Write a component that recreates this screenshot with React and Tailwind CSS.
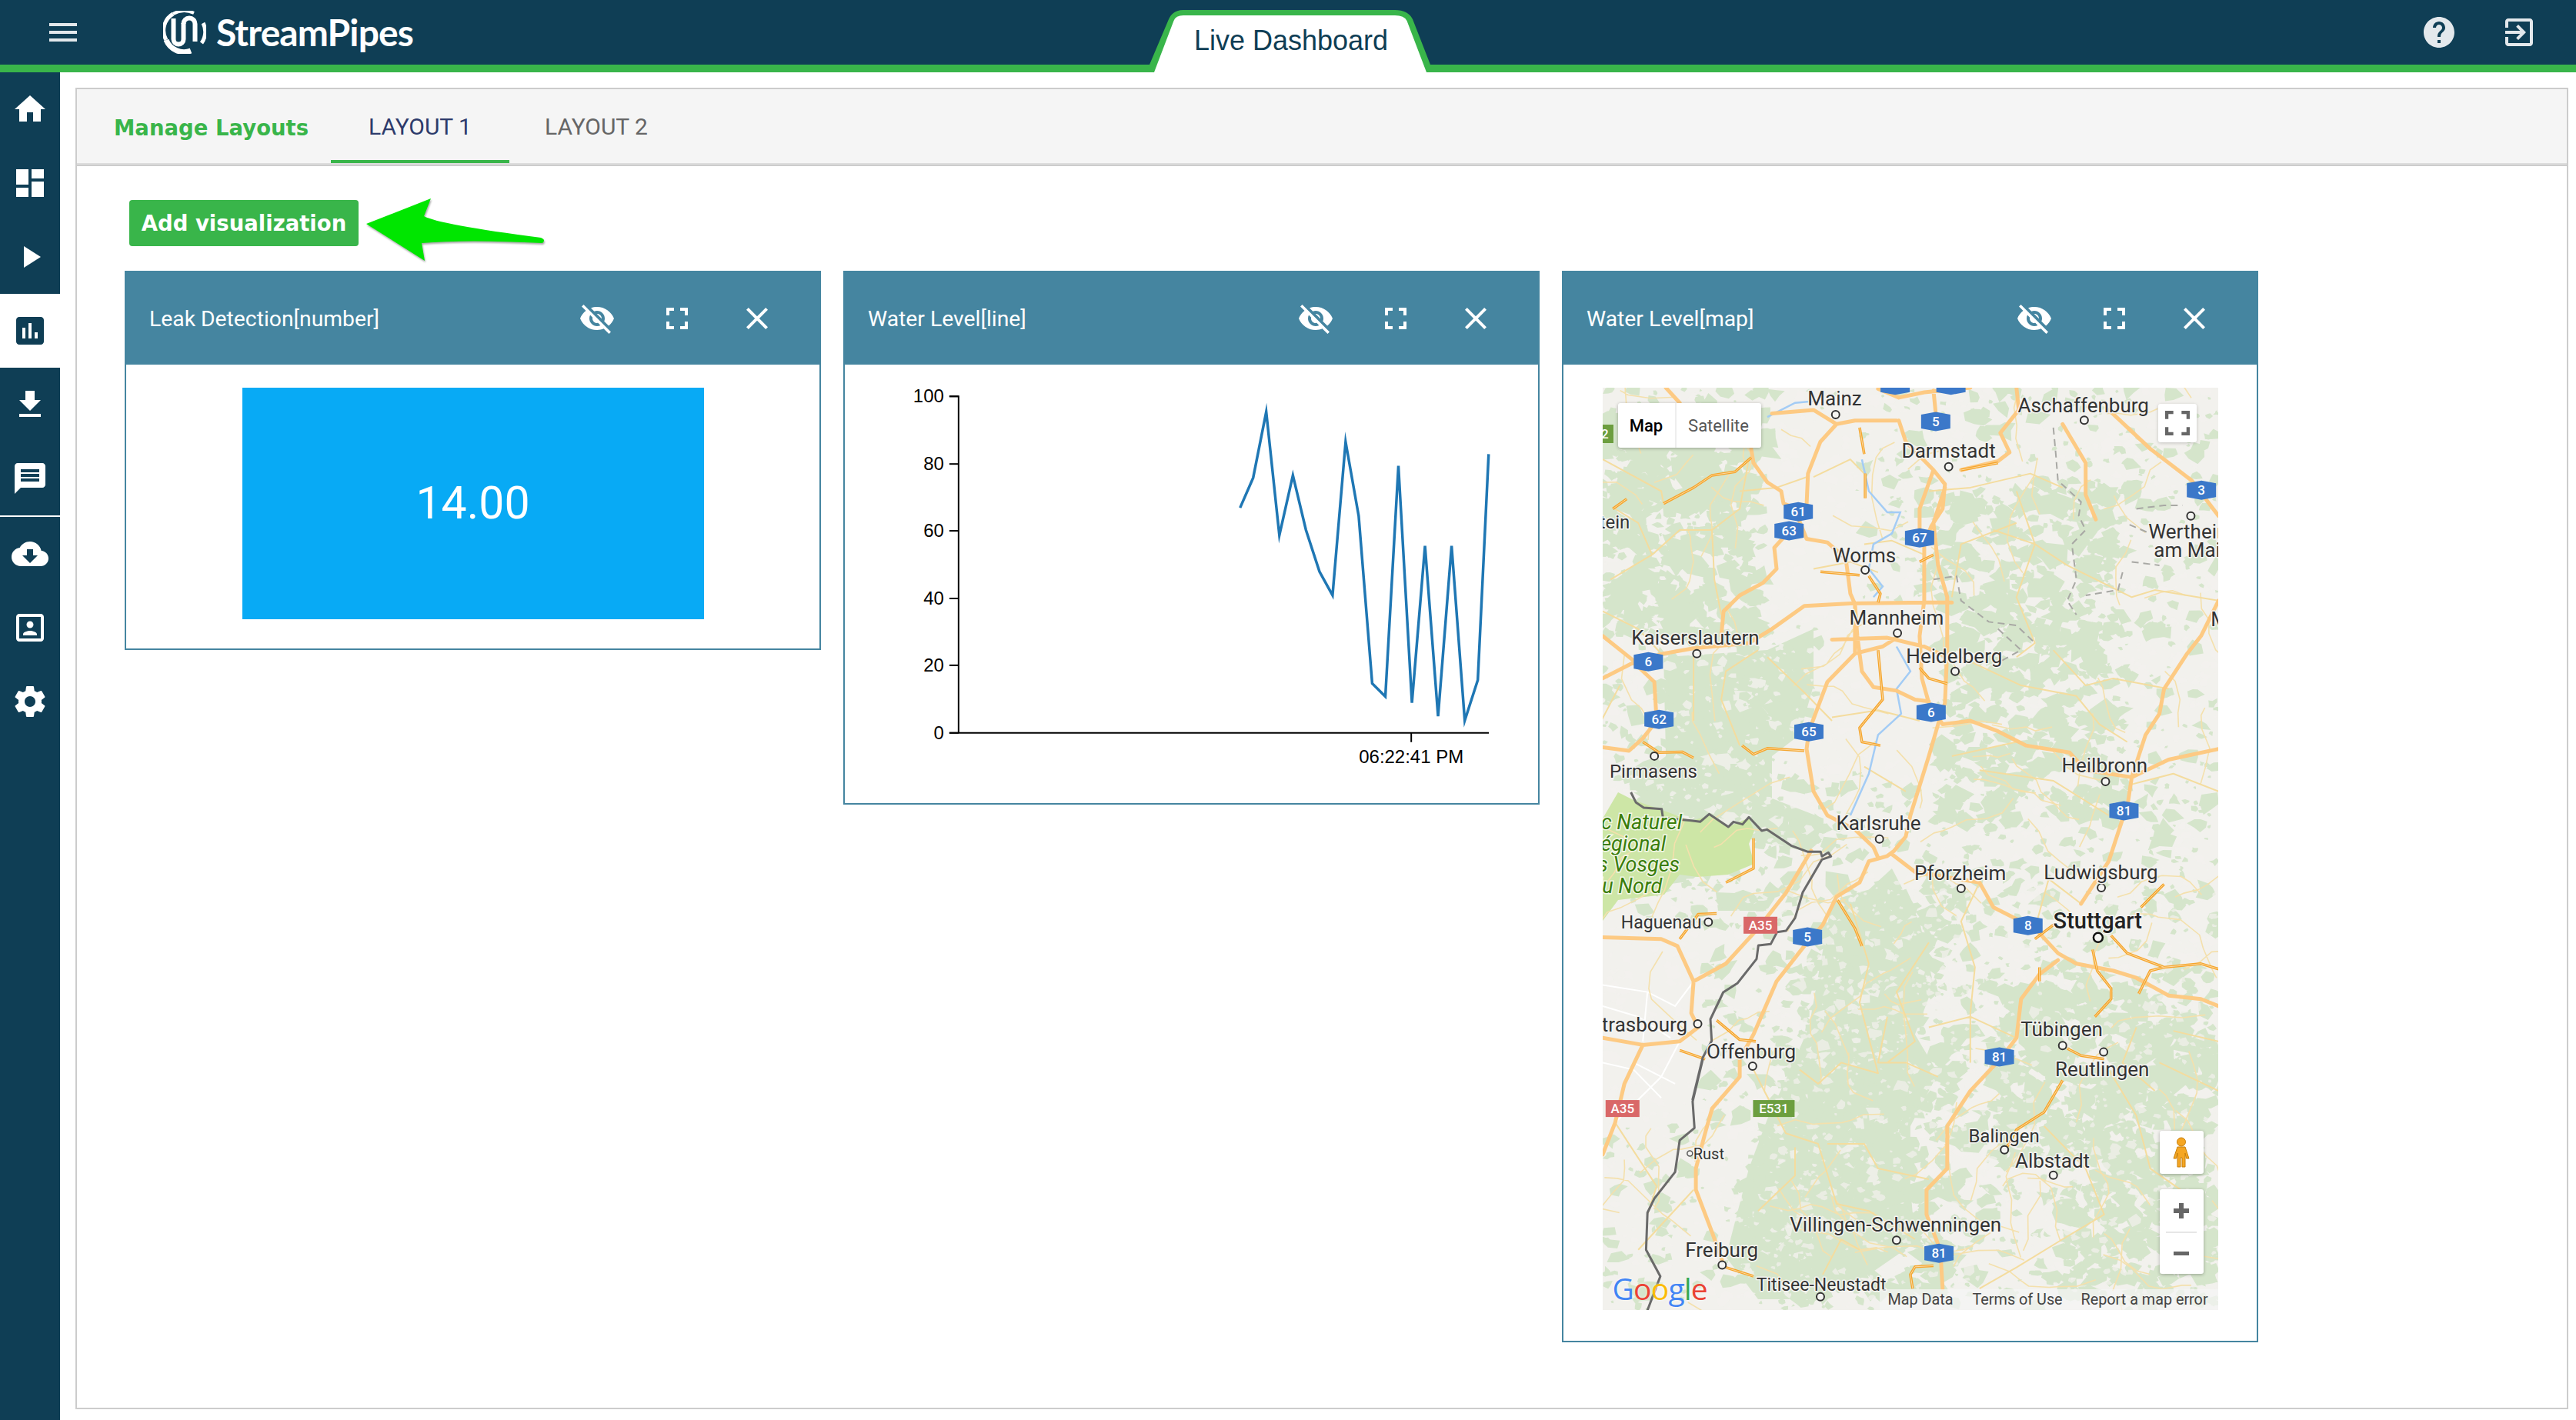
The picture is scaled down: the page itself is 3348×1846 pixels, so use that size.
const ICONS = {
  menu: "M3 18h18v-2H3v2zm0-5h18v-2H3v2zm0-7v2h18V6H3z",
  home: "M10 20v-6h4v6h5v-8h3L12 3 2 12h3v8z",
  dashboard: "M3 13h8V3H3v10zm0 8h8v-6H3v6zm10 0h8V11h-8v10zm0-18v6h8V3h-8z",
  play: "M8 5v14l11-7z",
  assessment: "M19 3H5c-1.1 0-2 .9-2 2v14c0 1.1.9 2 2 2h14c1.1 0 2-.9 2-2V5c0-1.1-.9-2-2-2zM9 17H7v-7h2v7zm4 0h-2V7h2v10zm4 0h-2v-4h2v4z",
  download: "M19 9h-4V3H9v6H5l7 7 7-7zM5 18v2h14v-2H5z",
  message: "M20 2H4c-1.1 0-1.99.9-1.99 2L2 22l4-4h14c1.1 0 2-.9 2-2V4c0-1.1-.9-2-2-2zm-2 12H6v-2h12v2zm0-3H6V9h12v2zm0-3H6V6h12v2z",
  cloud: "M19.35 10.04C18.67 6.59 15.64 4 12 4 9.11 4 6.6 5.64 5.35 8.04 2.34 8.36 0 10.91 0 14c0 3.31 2.69 6 6 6h13c2.76 0 5-2.24 5-5 0-2.64-2.05-4.78-4.65-4.96zM17 13l-5 5-5-5h3V9h4v4h3z",
  portrait: "M12 12.25c1.24 0 2.25-1.01 2.25-2.25S13.24 7.75 12 7.75 9.75 8.76 9.75 10s1.01 2.25 2.25 2.25zm4.5 4c0-1.5-3-2.25-4.5-2.25s-4.5.75-4.5 2.25V17h9v-.75zM19 3H5c-1.1 0-2 .9-2 2v14c0 1.1.9 2 2 2h14c1.1 0 2-.9 2-2V5c0-1.1-.9-2-2-2zm0 16H5V5h14v14z",
  settings: "M19.43 12.98c.04-.32.07-.64.07-.98s-.03-.66-.07-.98l2.11-1.65c.19-.15.24-.42.12-.64l-2-3.46c-.12-.22-.39-.3-.61-.22l-2.49 1c-.52-.4-1.08-.73-1.69-.98l-.38-2.65C14.46 2.18 14.25 2 14 2h-4c-.25 0-.46.18-.49.42l-.38 2.65c-.61.25-1.17.59-1.69.98l-2.49-1c-.23-.09-.49 0-.61.22l-2 3.46c-.13.22-.07.49.12.64l2.11 1.65c-.04.32-.07.65-.07.98s.03.66.07.98l-2.11 1.65c-.19.15-.24.42-.12.64l2 3.46c.12.22.39.3.61.22l2.49-1c.52.4 1.08.73 1.69.98l.38 2.65c.03.24.24.42.49.42h4c.25 0 .46-.18.49-.42l.38-2.65c.61-.25 1.17-.59 1.69-.98l2.49 1c.23.09.49 0 .61-.22l2-3.46c.12-.22.07-.49-.12-.64l-2.11-1.65zM12 15.5c-1.93 0-3.5-1.57-3.5-3.5s1.57-3.5 3.5-3.5 3.5 1.57 3.5 3.5-1.57 3.5-3.5 3.5z",
  help: "M12 2C6.48 2 2 6.48 2 12s4.48 10 10 10 10-4.48 10-10S17.52 2 12 2zm1 17h-2v-2h2v2zm2.07-7.75l-.9.92C13.45 12.9 13 13.5 13 15h-2v-.5c0-1.1.45-2.1 1.17-2.83l1.24-1.26c.37-.36.59-.86.59-1.41 0-1.1-.9-2-2-2s-2 .9-2 2H8c0-2.21 1.79-4 4-4s4 1.79 4 4c0 .88-.36 1.68-.93 2.25z",
  exit: "M10.09 15.59L11.5 17l5-5-5-5-1.41 1.41L12.67 11H3v2h9.67l-2.58 2.59zM19 3H5c-1.11 0-2 .9-2 2v4h2V5h14v14H5v-4H3v4c0 1.1.89 2 2 2h14c1.1 0 2-.9 2-2V5c0-1.1-.9-2-2-2z",
  fullscreen: "M7 14H5v5h5v-2H7v-3zm-2-4h2V7h3V5H5v5zm12 7h-3v2h5v-5h-2v3zM14 5v2h3v3h2V5h-5z",
  close: "M19 6.41L17.59 5 12 10.59 6.41 5 5 6.41 10.59 12 5 17.59 6.41 19 12 13.41 17.59 19 19 17.59 13.41 12z",
  eyeOff: "M12 7c2.76 0 5 2.24 5 5 0 .65-.13 1.26-.36 1.83l2.92 2.92c1.51-1.26 2.7-2.89 3.43-4.75-1.73-4.39-6-7.5-11-7.5-1.4 0-2.74.25-3.98.7l2.16 2.16C10.74 7.13 11.35 7 12 7zM2 4.27l2.28 2.28.46.46C3.08 8.3 1.78 10.02 1 12c1.73 4.39 6 7.5 11 7.5 1.55 0 3.03-.3 4.38-.84l.42.42L19.73 22 21 20.73 3.27 3 2 4.27zM7.53 9.8l1.55 1.55c-.05.21-.08.43-.08.65 0 1.66 1.34 3 3 3 .22 0 .44-.03.65-.08l1.55 1.55c-.67.33-1.41.53-2.2.53-2.76 0-5-2.24-5-5 0-.79.2-1.53.53-2.2zm4.31-.78l3.15 3.15.02-.16c0-1.66-1.34-3-3-3l-.17.01z",
};

function Icon({ name, className = "w-12 h-12" }) {
  return (
    <svg viewBox="0 0 24 24" className={`fill-current shrink-0 ${className}`}>
      <path d={ICONS[name]} />
    </svg>
  );
}

// Map geometry is read off two zoomed crops, so points stay in crop coordinates
const ROAD_SCALE = 1.668;
const mapY = (y, lower) => (lower ? 556 + y / 2.178 : (y - 357) / 2.178);
const toPath = (pts, lower) => {
  let d = "";
  for (let i = 0; i < pts.length; i += 2) {
    d += `${i ? "L" : "M"}${((pts[i] - 103) / ROAD_SCALE).toFixed(1)} ${mapY(pts[i + 1], lower).toFixed(1)}`;
  }
  return d;
};
const px = (x) => (x - 103) / ROAD_SCALE;

const MAJOR_TOP = [
  [103,1180,170,1135,235,1110,300,1095,420,1080,470,1040,540,975,640,968,800,965,860,965],
  [103,1060,170,1130],
  [425,530,430,570,460,625,490,650,495,685,525,700,545,690,548,600,575,510,610,460,650,450,740,450],
  [510,760,475,810,480,870,450,910,400,945,365,990,360,1060],
  [525,720,545,785,590,795,630,840,640,940,650,970,655,1060,665,1160,690,1205,740,1215,780,1240,810,1245],
  [820,365,825,430,825,460],
  [745,450,760,510,820,590,845,630,840,700,815,750,800,800,800,960,790,1060,795,1180,810,1250],
  [820,590,790,700,790,800],
  [845,640,820,740,830,860,850,950,850,1100,845,1250,830,1310,810,1400,770,1568],
  [810,1250,840,1310,900,1300,960,1330,1020,1370,1115,1390,1150,1440,1250,1460,1330,1410,1438,1380],
  [1240,1545,1250,1460],
  [600,1070,720,1065,800,1090,850,1120],
  [545,1380,550,1330,590,1190,650,1110,650,970],
  [545,1380,560,1500,590,1568],
  [1000,357,1005,420,965,485,985,540,960,565,880,590],
  [1200,420,1290,530,1380,620,1438,720],
  [1100,460,1150,570,1150,660,1172,730],
  [470,430,560,420,610,460],
  [700,360,745,385,800,370,900,357],
  [240,357,270,400],
  [1438,960,1400,1060,1370,1110,1320,1210,1310,1280,1280,1340,1250,1460],
  [103,1375,160,1385,190,1350,220,1300,215,1190,170,1135],
  [650,1110,710,1090,740,1065],
];
const MAJOR_BOTTOM = [
  [590,0,650,40,690,90,700,120],
  [720,115,680,130,660,190,610,230,580,310,540,370,480,470,430,620,400,690,400,740,340,830,325,900,305,1000,305,1060,340,1180,362,1260],
  [555,100,500,220,440,320,370,420,300,470,265,370,230,350,103,345],
  [300,470,295,560,310,600,270,640,190,650,103,630],
  [190,650,150,760,130,870,103,960],
  [730,110,780,160,920,190,950,260,1040,320,1090,390,1130,420,1210,440,1260,460,1330,510,1400,520,1438,540],
  [1230,10,1200,130,1140,250],
  [1090,410,1050,450,1010,520,1000,630,965,690,900,780,850,880,850,1000,805,1060,805,1130,835,1230,840,1340],
  [770,0,760,60,735,100,720,115],
];
const THIN_TOP = [
  [235,685,300,640,340,605,390,595,425,555],
  [125,700,155,672],
  [575,878,660,888],
  [672,600,672,670],
  [660,470,670,545],
  [405,1370,430,1395,460,1378,540,1385],
  [190,1360,225,1390,275,1388,300,1405],
  [790,850,820,830],
  [880,590,960,570],
  [680,890,705,940,700,965],
  [790,1150,810,1180,850,1195],
  [700,1100,710,1240,660,1320,665,1360,705,1370],
];
const THIN_BOTTOM = [
  [1205,340,1240,390,1320,430,1400,420,1438,435],
  [1040,350,1080,310],
  [1165,380,1175,440,1205,490,1205,520,1170,570],
  [1050,430,1050,470],
  [1110,660,1140,680,1190,690],
  [1100,750,1060,840,1000,890,975,950],
  [612,240,650,320,665,370],
  [430,65,430,150,370,190],
  [1320,195,1270,260],
  [350,580,400,635,435,640],
  [270,665,325,690],
  [370,1280,430,1305],
  [270,350,310,280,350,278],
  [1265,505,1290,440,1320,430],
  [775,1340,770,1300,780,1278,820,1275],
];
const MINOR_TOP = [
  [103,560,230,650,235,685],[420,560,400,700,340,760,345,900,360,1000],
  [545,610,480,640,400,650],[670,600,640,560,560,610],[810,650,900,640,1030,600,1100,640],
  [670,800,730,790,800,830],[560,870,640,850,700,880],[1000,650,1040,800,1110,860,1250,950,1300,930,1438,960],
  [1080,1100,1150,1200,1210,1180,1330,1210],[950,760,1040,800,1000,950,1040,1080,1000,1120],
  [440,1100,370,1160,360,1240,400,1370],[460,1120,540,1220,600,1300],[600,1290,700,1270,790,1300],
  [880,1120,1010,1200,1130,1230,1180,1310,1240,1360],[860,1400,1000,1360],[120,900,210,830,180,740,130,700],
  [210,830,270,760,340,760],[103,990,180,1040,230,1110],[860,950,880,800,1000,740],[1250,1480,1340,1450,1438,1500],
  [920,1440,1080,1470,1200,1568],[670,1430,760,1500],[140,1200,100,1300],[300,1120,300,1300],
];
const MINOR_BOTTOM = [
  [640,250,680,420,660,530,700,730,620,700,570,760,530,720],
  [720,570,700,700,760,700,830,740],[810,360,740,500,780,640,720,700],[920,190,880,300,910,430,900,560,900,700],
  [1000,630,900,570,810,600],[430,720,500,900,570,930,610,1100,680,1120,780,1200],
  [590,930,670,930,700,1000,810,1030],[1060,880,1150,1000,1190,1130,1100,1200,1000,1280],[1200,720,1260,850,1290,1000,1400,1100],
  [1310,700,1438,780],[1140,250,1070,180,1040,320],[1000,1280,920,1340],[520,940,520,1020,440,1120],[580,1300,620,1200,660,1230],
  [130,870,220,1050,200,1130],[300,1060,180,1230],[1260,600,1230,700,1300,780],[1438,640,1340,610],
];
const WHITE_BOTTOM = [
  [103,480,200,500,260,540,300,470],[200,500,190,640],[103,540,180,570,250,630],
  [270,640,230,740,130,870],[170,700,260,760],[103,700,170,720,230,800],
];
const BORDER = (() => {
  const a = [110,0,130,40,160,60,230,65,235,100,345,110,380,115,415,85,490,135,510,115,545,125,570,97,620,150,640,145,735,208,800,232,850,232,855,250,880,235,890,250,855,262,780,390,750,490,715,540,680,545,655,592,607,597,600,650,525,745,470,780,420,885,425,970,390,1035,350,1200];
  let d = "";
  for (let i = 0; i < a.length; i += 2) d += `${i ? "L" : "M"}${a[i] / 3} ${526 + a[i + 1] / 3}`;
  return d;
})();
const BORDER_SOUTH = [320,690,298,810,302,885,270,920,260,1010,215,1085,200,1125,197,1230,228,1305,200,1401];
const RIVER_TOP = [
  [460,440,520,400,560,395],[665,560,680,650,720,710,748,710,730,770,690,800,680,870,710,920,690,950],
  [740,1090,770,1160,740,1210,750,1280,700,1340,680,1450,640,1568],
];
const DASHED_TOP = [
  [1080,470,1085,540,1090,620,1140,680,1135,720,1150,760,1120,800,1130,900,1110,960,1130,1000],
  [1260,700,1320,690,1360,690],[1245,745,1290,770],[1250,850,1310,860],[1230,880,1220,930,1150,945],
  [820,900,870,890,880,960,940,1020,1000,1030,1040,1080],[960,1040,1010,1100,940,1150],
];
// only the two dense forests get a solid base, the rest of the green is speckle
const FORESTS = [
  toPath([235,1120,460,1100,560,1040,560,1200,530,1340,470,1400,470,1568,235,1568,160,1480,240,1400]) + "Z",
  toPath([600,240,680,210,730,150,790,300,820,480,780,620,830,730,770,880,770,1050,780,1210,680,1300,560,1370,440,1370,370,1250,420,1000,460,860,510,720,550,600], true) + "Z",
  `M40 526L200 526L287 560L287 586L267 603L200 590L130 560L80 552Z`,
  `M147 656L227 659L213 680L150 680Z`,
];
const PARC = `M0 560L20 526L40 536L77 549L115 563L140 556L163 571L190 559L197 576L190 593L197 619L163 633L123 636L100 633L80 659L20 666L0 693Z`;

function mulberry(seed) {
  return () => {
    seed |= 0; seed = (seed + 0x6d2b79f5) | 0;
    let t = Math.imul(seed ^ (seed >>> 15), 1 | seed);
    t = (t + Math.imul(t ^ (t >>> 7), 61 | t)) ^ t;
    return ((t ^ (t >>> 14)) >>> 0) / 4294967296;
  };
}
function blobs(seed, count, rMin, rMax, skip, box = [0, 0, 800, 1199]) {
  const rnd = mulberry(seed);
  let d = "";
  for (let i = 0; i < count; i++) {
    const cx = box[0] + rnd() * (box[2] - box[0]), cy = box[1] + rnd() * (box[3] - box[1]), r = rMin + rnd() * rnd() * (rMax - rMin);
    if (skip && skip(cx, cy)) continue;
    const sides = 5 + Math.floor(rnd() * 4);
    const st = rnd() * 6.28;
    for (let s = 0; s < sides; s++) {
      const ang = st + (s / sides) * 6.28, rr = r * (0.35 + rnd() * 0.9);
      d += `${s ? "L" : "M"}${(cx + Math.cos(ang) * rr * 1.3).toFixed(1)} ${(cy + Math.sin(ang) * rr).toFixed(1)}`;
    }
    d += "Z";
  }
  return d;
}
// short wandering side roads between the traced ones
function sideRoads(seed, count) {
  const rnd = mulberry(seed);
  let d = "";
  for (let i = 0; i < count; i++) {
    let x = rnd() * 800, y = rnd() * 1199, a = rnd() * 6.28;
    d += `M${x.toFixed(1)} ${y.toFixed(1)}`;
    const n = 3 + Math.floor(rnd() * 5);
    for (let s = 0; s < n; s++) {
      a += (rnd() - 0.5) * 1.3;
      const l = 10 + rnd() * 22;
      x += Math.cos(a) * l; y += Math.sin(a) * l;
      d += `L${x.toFixed(1)} ${y.toFixed(1)}`;
    }
  }
  return d;
}
const isPlain = (x, y) =>
  (x > 215 && x < 330 && y > 30 && y < 300) ||
  (x > 0 && x < 130 && y > 700 && y < 960) ||
  (x > 230 && x < 420 && y > 620 && y < 800) ||
  (x > 280 && x < 430 && y > 280 && y < 500);
const GREEN_SPECKS = blobs(7, 2400, 2, 17, isPlain);
const LIGHT_FLECKS = blobs(21, 3800, 1.5, 11);
const DENSE_GREEN = [
  blobs(61, 420, 5, 22, null, [440, 130, 680, 560]), // odenwald
  blobs(62, 420, 5, 24, null, [0, 30, 210, 330]), // pfalz north
  blobs(63, 420, 5, 24, null, [510, 780, 800, 1010]), // swabian edge
  blobs(64, 380, 5, 24, null, [220, 640, 480, 1190]), // black forest fringe
  blobs(65, 220, 5, 20, null, [600, 1010, 800, 1190]),
].join("");
const EXTRA_FLECKS = blobs(71, 800, 2, 9, null, [220, 640, 800, 1190]);
const YELLOW_ROADS = sideRoads(51, 130);

const SHIELDS_TOP = [["61",527,708],["63",507,762],["67",790,782],["5",825,453],["6",202,1133],["62",225,1296],["65",550,1331],["6",815,1276],["3",1401,647],["",737,350],["",858,350],["81",1233,1555]];
const SHIELDS_BOTTOM = [["8",1025,312],["5",547,344],["81",963,684],["81",832,1240]];
const PLATES = [["A35",445,311,"#d96868",44],["A35",146,830,"#d96868",44],["E531",474,830,"#6c9e3f",54]];

const LABELS_TOP = [
  ["Mainz",606,387],["Aschaffenburg",1145,407],["Darmstadt",853,535],["Wertheim",1379,763],["am Main",1382,816],["Worms",670,830],
  ["Mannheim",740,1007],["Kaiserslautern",304,1065],["Heidelberg",865,1117],["Heilbronn",1191,1425],["Pirmasens",213,1443,24],["Stein",117,736,24],["M",1440,1012],
];
const LABELS_BOTTOM = [
  ["Karlsruhe",701,22],["Pforzheim",878,163],["Ludwigsburg",1183,160],["Haguenau",230,303,23],["Strasbourg",181,592],["Offenburg",425,667],
  ["Tübingen",1098,605],["Reutlingen",1186,718],["Balingen",973,907,24],["Albstadt",1078,977],["Rust",333,957,20],
  ["Villingen-Schwenningen",738,1158],["Freiburg",361,1230],["Titisee-Neustadt",577,1328,23],
];
const PARC_LABELS = [["Parc Naturel",275,20],["Régional",240,80],["des Vosges",270,140],["du Nord",232,200]];
const DOTS_TOP = [[608,433],[1147,449],[853,581],[1378,720],[672,873],[742,1052],[307,1110],[867,1160],[1193,1472],[215,1400]];
const DOTS_BOTTOM = [[703,67],[880,207],[1184,205],[332,302],[309,590],[428,710],[1100,652],[1189,670],[974,947],[1080,1019],[740,1203],[362,1273],[575,1363]];

function Shield({ label, x, y }) {
  return (
    <g transform={`translate(${x} ${y})`}>
      <path d="M-19 -9L0 -12.5L19 -9V9L0 12.5L-19 9Z" fill="#3b78c9" />
      <text y="6" textAnchor="middle" fontFamily="Roboto" fontWeight="500" fontSize="17" fill="#fff">{label}</text>
    </g>
  );
}

function MapLabel({ text, x, y, size = 26 }) {
  return (
    <text x={x} y={y + size * 0.36} textAnchor="middle" fontFamily="Roboto" fontSize={size} fill="#333" stroke="#f5f5f2" strokeWidth="3" paintOrder="stroke" strokeLinejoin="round">
      {text}
    </text>
  );
}

function MapDrawing() {
  const lines = (list, lower) => list.map((p) => toPath(p, lower)).join("");
  return (
    <svg viewBox="0 0 800 1199" className="w-[800px] h-[1199px] block">
      <rect width="800" height="1199" fill="#f2f1ed" />
      {FORESTS.map((d, i) => <path key={i} d={d} fill="#d5e5cb" />)}
      <path d={LIGHT_FLECKS} fill="#f2f1ed" opacity="0.8" />
      <path d={GREEN_SPECKS} fill="#d5e5cb" />
      <path d={DENSE_GREEN} fill="#d5e5cb" />
      <path d={EXTRA_FLECKS} fill="#f2f1ed" opacity="0.7" />
      <path d={PARC} fill="#cde6a6" />
      <path d={lines(WHITE_BOTTOM, true)} fill="none" stroke="#ffffff" strokeWidth="2" />
      <path d={YELLOW_ROADS} fill="none" stroke="#f4e0ac" strokeWidth="1.6" strokeLinejoin="round" />
      <path d={lines(MINOR_TOP) + lines(MINOR_BOTTOM, true)} fill="none" stroke="#f4dc9e" strokeWidth="2" strokeLinejoin="round" />
      <path d={lines(RIVER_TOP)} fill="none" stroke="#a3ccf5" strokeWidth="2.5" />
      <path d={lines(DASHED_TOP)} fill="none" stroke="#a8a8a4" strokeWidth="2" strokeDasharray="9 6" />
      <path d={lines(MAJOR_TOP) + lines(MAJOR_BOTTOM, true)} fill="none" stroke="#fdca83" strokeWidth="5" strokeLinejoin="round" strokeLinecap="round" />
      <path d={lines(THIN_TOP) + lines(THIN_BOTTOM, true)} fill="none" stroke="#f5a52c" strokeWidth="3.5" strokeLinejoin="round" />
      <path d={lines(THIN_TOP) + lines(THIN_BOTTOM, true)} fill="none" stroke="#fdd9a0" strokeWidth="1" strokeLinejoin="round" />
      <path d={BORDER + toPath(BORDER_SOUTH, true)} fill="none" stroke="#6a6a6a" strokeWidth="3" strokeLinejoin="round" />
      {DOTS_TOP.map(([x, y]) => <circle key={`${x}-${y}`} cx={px(x)} cy={mapY(y)} r="5" fill="#f5f5f2" stroke="#333" strokeWidth="2" />)}
      {DOTS_BOTTOM.map(([x, y]) => <circle key={`${x}-${y}`} cx={px(x)} cy={mapY(y, true)} r="5" fill="#f5f5f2" stroke="#333" strokeWidth="2" />)}
      <circle cx={px(292)} cy={mapY(957, true)} r="3.5" fill="#f5f5f2" stroke="#555" strokeWidth="1.5" />
      <circle cx={px(1177)} cy={mapY(346, true)} r="6" fill="#f5f5f2" stroke="#111" strokeWidth="2.5" />
      {SHIELDS_TOP.map(([t, x, y]) => <Shield key={`${x}-${y}`} label={t} x={px(x)} y={mapY(y)} />)}
      {SHIELDS_BOTTOM.map(([t, x, y]) => <Shield key={`${x}-${y}`} label={t} x={px(x)} y={mapY(y, true)} />)}
      <rect x="0" y="48" width="14" height="24" fill="#6c9e3f" />
      <text x="-2" y="66" fontFamily="Roboto" fontWeight="500" fontSize="17" fill="#fff">2</text>
      {PLATES.map(([t, x, y, c, w]) => (
        <g key={`${x}-${y}`} transform={`translate(${px(x)} ${mapY(y, true)})`}>
          <rect x={-w / 2} y="-11" width={w} height="22" fill={c} />
          <text y="6" textAnchor="middle" fontFamily="Roboto" fontWeight="500" fontSize="17" fill="#fff">{t}</text>
        </g>
      ))}
      {LABELS_TOP.map(([t, x, y, s]) => <MapLabel key={t} text={t} x={px(x)} y={mapY(y)} size={s} />)}
      {LABELS_BOTTOM.map(([t, x, y, s]) => <MapLabel key={t} text={t} x={px(x)} y={mapY(y, true)} size={s} />)}
      <text x={px(1176)} y={mapY(296, true) + 11} textAnchor="middle" fontFamily="Roboto" fontWeight="500" fontSize="29" fill="#222" stroke="#f5f5f2" strokeWidth="3" paintOrder="stroke">Stuttgart</text>
      {PARC_LABELS.map(([t, x, y]) => (
        <text key={t} x={px(x)} y={mapY(y, true) + 9} textAnchor="end" fontFamily="Roboto" fontStyle="italic" fontSize="27" fill="#3a7d0a" stroke="#f3f7ea" strokeWidth="3" paintOrder="stroke">{t}</text>
      ))}
    </svg>
  );
}

function MapCard() {
  return (
    <div className="relative w-[800px] h-[1199px] overflow-hidden">
      <MapDrawing />
      <div className="absolute left-[20px] top-[20px] w-[186px] h-[58px] flex bg-white rounded-[3px] shadow-[0_1px_4px_rgba(0,0,0,0.3)] text-[22px]">
        <div className="w-[76px] flex items-center justify-center font-medium text-black border-r-2 border-[#eeeeee]">Map</div>
        <div className="flex-1 flex items-center justify-center text-[#565656]">Satellite</div>
      </div>
      <div className="absolute left-[722px] top-[21px] w-[50px] h-[50px] flex items-center justify-center bg-white rounded-[3px] shadow-[0_1px_4px_rgba(0,0,0,0.2)] text-[#666666]">
        <svg viewBox="0 0 30 30" className="w-[32px] h-[32px]">
          <path d="M2 10V2H10M20 2H28V10M28 20V28H20M10 28H2V20" fill="none" stroke="currentColor" strokeWidth="4" />
        </svg>
      </div>
      <div className="absolute left-[724px] top-[966px] w-[57px] h-[56px] flex items-center justify-center bg-white rounded-[3px] shadow-[0_1px_4px_rgba(0,0,0,0.3)]">
        <svg viewBox="0 0 24 40" className="w-[24px] h-[40px]">
          <circle cx="12" cy="6.5" r="5.5" fill="#f5a623" stroke="#c77f0a" />
          <path d="M7 13H17L22 28H18.5L17 21V39H13V27H11V39H7V21L5.5 28H2Z" fill="#f5a623" stroke="#c77f0a" />
        </svg>
      </div>
      <div className="absolute left-[724px] top-[1042px] w-[57px] h-[110px] flex flex-col items-center bg-white rounded-[3px] shadow-[0_1px_4px_rgba(0,0,0,0.3)] text-[#666666]">
        <div className="h-[55px] flex items-center justify-center">
          <svg viewBox="0 0 20 20" className="w-[20px] h-[20px]"><path d="M7 0h6v7h7v6h-7v7H7v-7H0V7h7z" fill="currentColor" /></svg>
        </div>
        <div className="w-[40px] h-[2px] bg-[#e6e6e6]" />
        <div className="h-[53px] flex items-center justify-center">
          <svg viewBox="0 0 20 20" className="w-[20px] h-[20px]"><path d="M0 7h20v5H0z" fill="currentColor" /></svg>
        </div>
      </div>
      <div className="absolute left-[13px] top-[1148px] flex font-['Open_Sans',sans-serif] text-[39px] leading-[46px] tracking-[-0.8px] [text-shadow:0_0_3px_rgba(255,255,255,0.9)]">
        <span className="text-[#4285f4]">G</span>
        <span className="text-[#ea4335]">o</span>
        <span className="text-[#fbbc05]">o</span>
        <span className="text-[#4285f4]">g</span>
        <span className="text-[#34a853]">l</span>
        <span className="text-[#ea4335]">e</span>
      </div>
      <div className="absolute right-0 bottom-0 left-[360px] h-[27px] flex items-center bg-[#f5f5f5]/70 text-[19.8px] text-[#444444] pl-[11px]">
        <span className="w-[104px]">Map Data</span>
        <span className="w-[143px] pl-[6px]">Terms of Use</span>
        <span className="pl-[4px]">Report a map error</span>
      </div>
    </div>
  );
}

// Water level samples, in pixels of the card body
const LINE = [[890,697],[919,612],[948,425],[977,775],[1007,605],[1036,760],[1066,878],[1095,945],[1124,510],[1153,720],[1183,1195],[1212,1232],[1241,578],[1271,1250],[1300,805],[1329,1288],[1359,805],[1388,1300],[1417,1185],[1441,545]];

function LineChart() {
  const d = LINE.map(([x, y], i) => `${i ? "L" : "M"}${(1090 + x / 1.704).toFixed(1)} ${(340 + y / 2.178).toFixed(1)}`).join("");
  const ticks = [[100,515],[80,603],[60,690],[40,778],[20,865],[0,953]];
  return (
    <svg viewBox="1098 474 902 570" className="w-full h-[570px] block font-['Liberation_Sans',sans-serif]">
      <path d="M1234 515H1246V953M1234 953H1936" fill="none" stroke="#000" strokeWidth="2" />
      {ticks.map(([v, y]) => (
        <g key={v}>
          <path d={`M1234 ${y}H1246`} stroke="#000" strokeWidth="2" />
          <text x="1227" y={y + 8} textAnchor="end" fontSize="24" fill="#000">{v}</text>
        </g>
      ))}
      <path d="M1835 953V965" stroke="#000" strokeWidth="2" />
      <text x="1835" y="992" textAnchor="middle" fontSize="24" fill="#000">06:22:41 PM</text>
      <path d={d} fill="none" stroke="#1f77b4" strokeWidth="3.5" strokeMiterlimit="10" />
    </svg>
  );
}

function Widget({ title, children }) {
  return (
    <div className="w-[905px] shrink-0 border-2 border-[#4585a0] bg-white">
      <div className="h-[120px] bg-[#4585a0] text-white flex items-center pl-[30px] pr-[57px]">
        <span className="text-[28.3px] flex-1 pt-[2px]">{title}</span>
        <div className="flex items-center gap-[56px]">
          <Icon name="eyeOff" />
          <Icon name="fullscreen" />
          <Icon name="close" />
        </div>
      </div>
      {children}
    </div>
  );
}

function Sidebar() {
  const items = ["home", "dashboard", "play", "assessment", "download", "message"];
  return (
    <aside className="w-[78px] shrink-0 bg-[#0f3e55] text-white flex flex-col">
      {items.map((name) => (
        <div
          key={name}
          className={`h-[96px] flex items-center justify-center ${name === "assessment" ? "bg-white text-[#0f3e55]" : ""}`}
        >
          <Icon name={name} />
        </div>
      ))}
      <div className="h-[2px] bg-white" />
      {["cloud", "portrait", "settings"].map((name) => (
        <div key={name} className="h-[96px] flex items-center justify-center">
          <Icon name={name} />
        </div>
      ))}
    </aside>
  );
}

function Logo() {
  return (
    <svg viewBox="0 0 56 56" className="w-[56px] h-[56px]">
      <g fill="none" stroke="#fff">
        <path d="M13 4A25 25 0 0 0 4 38" strokeWidth="5" />
        <path d="M4 38A25 25 0 0 0 36 52" strokeWidth="7" />
        <path d="M52 16A25 25 0 0 1 50 42" strokeWidth="5" />
        <path d="M13.5 10V37A6.5 6.5 0 0 0 26.5 37V16" strokeWidth="6" />
        <path d="M26.5 17A7.5 7.5 0 0 1 41.5 17V40" strokeWidth="6" />
        <path d="M13 4A30 30 0 0 1 40 3" strokeWidth="4" />
      </g>
    </svg>
  );
}

export default function App() {
  return (
    <div className="min-h-screen flex flex-col bg-white font-['Roboto',sans-serif]">
      <header className="relative h-[94px] shrink-0 bg-[#0f3e55] border-b-[10px] border-[#39b54a] text-[#e3e8ec] flex items-center">
        <div className="ml-[58px]">
          <Icon name="menu" />
        </div>
        <div className="ml-[106px] flex items-center text-white">
          <Logo />
          <span className="ml-[13px] font-['Lato',sans-serif] font-bold text-[48px] leading-none tracking-[-0.9px]">StreamPipes</span>
        </div>
        <div className="absolute left-[1494px] top-[13px] w-[365px] h-[81px]">
          <svg viewBox="0 0 365 81" className="w-[365px] h-[81px] block">
            <path d="M0 71L25 12Q30 0 44 0H319Q336 0 342 12L365 71V81H0Z" fill="#39b54a" />
            <path d="M6 81L31.5 14Q34 7 44 7H319Q331 7 334.5 14L360 81Z" fill="#fff" />
          </svg>
          <span className="absolute inset-x-0 top-[20px] pl-[3px] text-center font-['Liberation_Sans',sans-serif] text-[36px] leading-[40px] text-[#0f3e55]">Live Dashboard</span>
        </div>
        <div className="ml-auto flex items-center gap-[56px] pr-[50px]">
          <Icon name="help" />
          <Icon name="exit" />
        </div>
      </header>

      <div className="flex-1 flex">
        <Sidebar />
        <main className="flex-1 pt-[20px] pl-[20px] pr-[10px] pb-[14px] flex">
          <div className="flex-1 border-2 border-[#cccccc]">
            <div className="border-b-2 border-[#cccccc]">
              <div className="h-[98px] bg-[#f5f5f5] border-b-2 border-[#dddddd] flex items-stretch">
                <div className="w-[330px] pl-[48px] flex items-center pt-[6px] font-['DejaVu_Sans',sans-serif] font-bold text-[27.5px] text-[#39b54a]">
                  Manage Layouts
                </div>
                <div className="w-[232px] flex items-center justify-center pt-[4px] border-b-4 border-[#39b54a] text-[30px] text-[#2d3b6b]">LAYOUT 1</div>
                <div className="w-[226px] flex items-center justify-center pt-[4px] border-b-4 border-transparent text-[30px] text-[#666666]">LAYOUT 2</div>
              </div>
            </div>
            <div className="pt-[44px] pl-[62px]">
              <div className="flex items-start pl-[6px]">
                <button className="w-[298px] h-[60px] pt-[2px] rounded-[4px] bg-[#39b54a] text-white font-['DejaVu_Sans',sans-serif] font-bold text-[27.5px]">
                  Add visualization
                </button>
                <svg viewBox="0 0 234 90" className="w-[234px] h-[90px] ml-[10px] -mt-[6px] -mb-[24px] drop-shadow-[1px_2px_1px_rgba(0,0,0,0.35)]">
                  <path d="M0 37L84 4L75 27Q95 38 227 55Q234 58 229 62Q130 57 72 62L76 85Z" fill="#00e600" />
                </svg>
              </div>
              <div className="mt-[32px] flex items-start gap-[29px]">
                <Widget title="Leak Detection[number]">
                  <div className="flex justify-center pt-[30px] pb-[38px]">
                    <div className="w-[600px] h-[301px] bg-[#08aaf5] flex items-center justify-center text-white text-[59px]">14.00</div>
                  </div>
                </Widget>
                <Widget title="Water Level[line]">
                  <LineChart />
                </Widget>
                <Widget title="Water Level[map]">
                  <div className="flex justify-center pt-[30px] pb-[40px]">
                    <MapCard />
                  </div>
                </Widget>
              </div>
            </div>
          </div>
        </main>
      </div>
    </div>
  );
}
